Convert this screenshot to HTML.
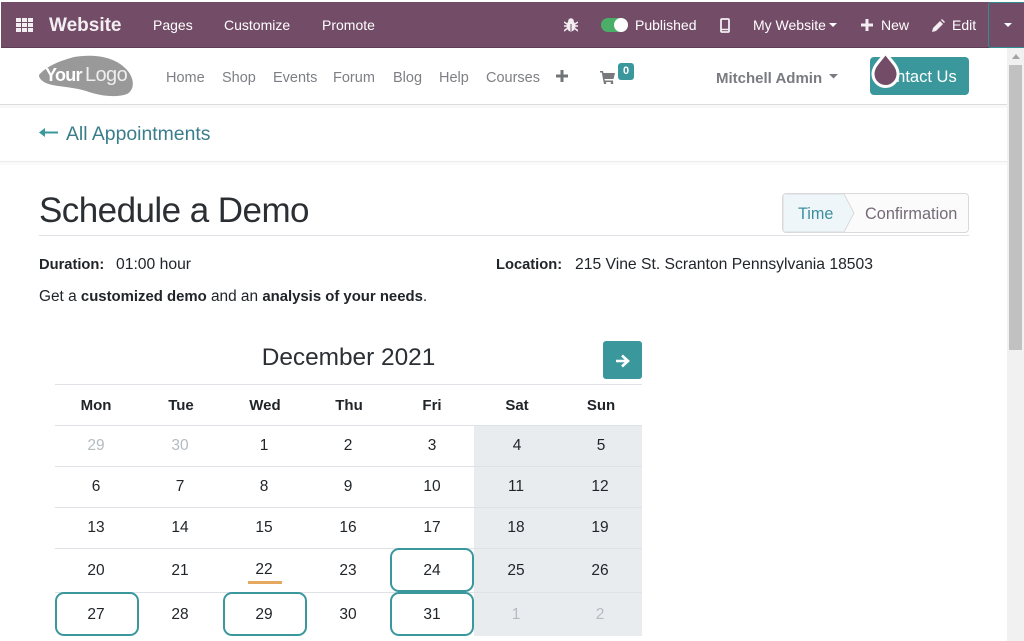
<!DOCTYPE html>
<html><head><meta charset="utf-8"><style>
html,body{margin:0;padding:0;width:1024px;height:641px;overflow:hidden;background:#fff}
body{position:relative;font-family:"Liberation Sans",sans-serif;color:#212529}
.a{position:absolute;white-space:nowrap;line-height:1}
.t{font-size:14px;color:#fff}
.n{font-size:14.5px;color:#7d7f84;top:71px}
.c{position:absolute;width:84px;text-align:center;font-size:15.5px;line-height:1;color:#212529}
.h{font-weight:bold;font-size:15px}
.m{color:#b4bcc2}
.l{position:absolute;left:55px;width:587px;height:1px;background:#dee2e6}
.b{position:absolute;width:80px;border:2px solid #3a979c;border-radius:9px;background:#fff}
.p{font-size:15.7px}
.p b{font-size:14.7px}
svg{position:absolute;display:block}
</style></head><body>
<div class="a" style="left:1px;top:2px;width:1023px;height:45px;background:#734c67"></div>
<div class="a" style="left:1px;top:47px;width:1023px;height:1px;background:#5e3f55"></div>
<svg style="left:16px;top:18px" width="18" height="15"><path fill="#f3eef2" d="M0 0h5v4H0zM6 0h5v4H6zM12 0h5v4h-5zM0 5h5v4H0zM6 5h5v4H6zM12 5h5v4h-5zM0 10h5v4H0zM6 10h5v4H6zM12 10h5v4h-5z"/></svg>
<div class="a" style="left:49px;top:16px;font-size:19px;font-weight:bold;color:#f3eef2">Website</div>
<div class="a t" style="left:153px;top:18px">Pages</div>
<div class="a t" style="left:224px;top:18px">Customize</div>
<div class="a t" style="left:322px;top:18px">Promote</div>
<svg style="left:564px;top:18px" width="14" height="14"><ellipse cx="7" cy="8" rx="4.500" ry="5.500" fill="#f3eef2"/><circle cx="7" cy="3" r="2.800" fill="#f3eef2"/><path stroke="#f3eef2" stroke-width="1.500" d="M0 4l3 2M14 4l-3 2M0 8h3M14 8h-3M0 13l3-2.500M14 13l-3-2.500"/><path stroke="#734c67" d="M7 6v7"/></svg>
<div class="a" style="left:601px;top:18px;width:27px;height:14px;background:#4aad68;border-radius:7px"></div>
<div class="a" style="left:614px;top:18px;width:14px;height:14px;background:#fff;border-radius:50%"></div>
<div class="a t" style="left:635px;top:18px">Published</div>
<svg style="left:720px;top:18px" width="10" height="15"><rect x="1" y="1" width="8" height="13" rx="1" fill="none" stroke="#f3eef2" stroke-width="1.800"/><path stroke="#f3eef2" stroke-width="1.500" d="M1 11.500h8"/></svg>
<div class="a t" style="left:753px;top:18px">My Website</div>
<svg style="left:829px;top:23px" width="8" height="5"><path fill="#fff" d="M0 0h8L4 4z"/></svg>
<svg style="left:861px;top:19px" width="12" height="12"><path fill="#f3eef2" d="M4.500 0h3v4.500H12v3H7.500V12h-3V7.500H0v-3h4.500z"/></svg>
<div class="a t" style="left:881px;top:18px">New</div>
<svg style="left:932px;top:19px" width="13" height="13"><path fill="#f3eef2" d="M0 13l1-4 7-7 3 3-7 7zM9 1l1-1 3 3-1 1z"/></svg>
<div class="a t" style="left:952px;top:18px">Edit</div>
<div class="a" style="left:988px;top:2px;width:36px;height:44px;border:1px solid #2f8f93;border-right:0;border-radius:3px 0 0 3px;box-sizing:content-box"></div>
<svg style="left:1004px;top:23px" width="8" height="5"><path fill="#fff" d="M0 0h8L4 4z"/></svg>

<div class="a" style="left:0;top:104px;width:1007px;height:1px;background:#dcdcdc"></div>
<div class="a" style="left:0;top:105px;width:1007px;height:3px;background:#f8f8f8"></div>
<svg style="left:38px;top:55px" width="96" height="42"><path fill="#999" d="M1 20C8 12 18 7 36 2 54-1 75 1 87 13 96 21 98 34 89 39 78 43 62 41 48 36 32 31 14 32 6 27 3 25 1 23 1 20z"/></svg>
<div class="a" style="left:45px;top:66px;font-size:18px;font-weight:bold;color:#fff;letter-spacing:-.7px">Your</div>
<div class="a" style="left:85px;top:65px;font-size:20px;color:#eee;letter-spacing:-.6px">Logo</div>
<div class="a n" style="left:166px">Home</div>
<div class="a n" style="left:222px">Shop</div>
<div class="a n" style="left:273px">Events</div>
<div class="a n" style="left:333px">Forum</div>
<div class="a n" style="left:393px">Blog</div>
<div class="a n" style="left:439px">Help</div>
<div class="a n" style="left:486px">Courses</div>
<svg style="left:556px;top:70px" width="12" height="12"><path fill="#727479" d="M4.500 0h3v4.500H12v3H7.500V12h-3V7.500H0v-3h4.500z"/></svg>
<svg style="left:600px;top:71px" width="15" height="13"><path fill="#77797d" d="M0 0h3l.5 2H15l-1.500 6H4.500l.3 1.500H13V11H3.500L1.800 1.500H0z"/><circle cx="5" cy="12" r="1.300" fill="#77797d"/><circle cx="12" cy="12" r="1.300" fill="#77797d"/></svg>
<div class="a" style="left:618px;top:63px;width:16px;height:17px;background:#3a979c;border-radius:3px;color:#fff;font-size:11px;font-weight:bold;text-align:center;line-height:17px">0</div>
<div class="a" style="left:716px;top:71px;font-size:15px;font-weight:bold;color:#797b80">Mitchell Admin</div>
<svg style="left:829px;top:74px" width="9" height="5"><path fill="#797b80" d="M0 0h9L4.500 4.500z"/></svg>
<div class="a" style="left:870px;top:57px;width:99px;height:38px;background:#3a979c;border-radius:4px"></div>
<div class="a" style="left:887px;top:69px;font-size:16.500px;color:#fff">ontact Us</div>
<svg style="left:870px;top:50px" width="32" height="38"><path fill="#734c67" stroke="#fff" stroke-width="3" d="M15.500 3C21 11 28 16 28 24a12.500 12.500 0 0 1-25 0C3 16 10 11 15.500 3z"/></svg>

<svg style="left:39px;top:127px" width="20" height="11"><path fill="#3a979c" d="M0 5.500L6 1v3.500h13v2H6V10z"/></svg>
<div class="a" style="left:66px;top:125px;font-size:19.400px;color:#3b7d8c">All Appointments</div>
<div class="a" style="left:0;top:161px;width:1007px;height:1px;background:#ececec"></div>
<div class="a" style="left:0;top:162px;width:1007px;height:3px;background:#fafafa"></div>

<div class="a" style="left:39px;top:193px;font-size:35px;letter-spacing:-.55px;color:#2b2f33">Schedule a Demo</div>
<div class="a" style="left:39px;top:235px;width:930px;height:1px;background:#dee2e6"></div>
<div class="a" style="left:782px;top:193px;width:185px;height:38px;border:1px solid #d9d9dc;border-radius:4px;background:#fbfbfb"></div>
<svg style="left:783px;top:194px" width="72" height="38"><path fill="#eff6f9" stroke="#dadadd" d="M0 0H61L71 19 61 38H0z"/></svg>
<div class="a" style="left:798px;top:206px;font-size:16.200px;color:#3c8f9f">Time</div>
<div class="a" style="left:865px;top:206px;font-size:16.300px;color:#766a78">Confirmation</div>

<div class="a p" style="left:39px;top:257px"><b>Duration:</b></div>
<div class="a p" style="left:116px;top:257px">01:00 hour</div>
<div class="a p" style="left:496px;top:257px"><b>Location:</b></div>
<div class="a p" style="left:575px;top:257px">215 Vine St. Scranton Pennsylvania 18503</div>
<div class="a p" style="left:39px;top:289px;font-size:15.400px">Get a <b style="font-size:14.900px">customized demo</b> and an <b style="font-size:14.900px">analysis of your needs</b>.</div>

<div class="a" style="left:55px;top:346px;width:587px;text-align:center;font-size:24.400px;color:#2b2f33">December 2021</div>
<div class="a" style="left:603px;top:341px;width:39px;height:38px;background:#3a979c;border-radius:3px"></div>
<svg style="left:616px;top:354px" width="14" height="14"><path fill="none" stroke="#fff" stroke-width="2.600" d="M0 7h11M6 1.500L12 7l-6 5.500"/></svg>

<div class="a" style="left:474px;top:426px;width:168px;height:210px;background:#e9ecef"></div>
<div class="l" style="top:384px;background:#dfe2e6"></div>
<div class="l" style="top:425px"></div>
<div class="l" style="top:466px"></div>
<div class="l" style="top:507px"></div>
<div class="l" style="top:548px"></div>
<div class="l" style="top:592px"></div>

<div class="c h" style="left:54px;top:398px">Mon</div><div class="c h" style="left:139px;top:398px">Tue</div><div class="c h" style="left:223px;top:398px">Wed</div><div class="c h" style="left:307px;top:398px">Thu</div><div class="c h" style="left:390px;top:398px">Fri</div><div class="c h" style="left:475px;top:398px">Sat</div><div class="c h" style="left:559px;top:398px">Sun</div>

<div class="c m" style="left:54px;top:438px">29</div><div class="c m" style="left:138px;top:438px">30</div><div class="c" style="left:222px;top:438px">1</div><div class="c" style="left:306px;top:438px">2</div><div class="c" style="left:390px;top:438px">3</div><div class="c" style="left:475px;top:438px">4</div><div class="c" style="left:559px;top:438px">5</div>
<div class="c" style="left:54px;top:479px">6</div><div class="c" style="left:138px;top:479px">7</div><div class="c" style="left:222px;top:479px">8</div><div class="c" style="left:306px;top:479px">9</div><div class="c" style="left:390px;top:479px">10</div><div class="c" style="left:474px;top:479px">11</div><div class="c" style="left:558px;top:479px">12</div>
<div class="c" style="left:54px;top:520px">13</div><div class="c" style="left:138px;top:520px">14</div><div class="c" style="left:222px;top:520px">15</div><div class="c" style="left:306px;top:520px">16</div><div class="c" style="left:390px;top:520px">17</div><div class="c" style="left:474px;top:520px">18</div><div class="c" style="left:558px;top:520px">19</div>

<div class="b" style="left:390px;top:548px;height:40px"></div>
<div class="b" style="left:55px;top:592px;height:40px"></div>
<div class="b" style="left:223px;top:592px;height:40px"></div>
<div class="b" style="left:390px;top:592px;height:40px"></div>

<div class="c" style="left:54px;top:563px">20</div><div class="c" style="left:138px;top:563px">21</div><div class="c" style="left:222px;top:562px">22</div><div class="c" style="left:306px;top:563px">23</div><div class="c" style="left:390px;top:563px">24</div><div class="c" style="left:474px;top:563px">25</div><div class="c" style="left:558px;top:563px">26</div>
<div class="a" style="left:248px;top:581px;width:34px;height:3px;background:#e4a85f"></div>
<div class="c" style="left:54px;top:607px">27</div><div class="c" style="left:138px;top:607px">28</div><div class="c" style="left:222px;top:607px">29</div><div class="c" style="left:306px;top:607px">30</div><div class="c" style="left:390px;top:607px">31</div><div class="c m" style="left:474px;top:607px">1</div><div class="c m" style="left:558px;top:607px">2</div>

<div class="a" style="left:1007px;top:48px;width:17px;height:593px;background:#f1f1f1"></div>
<div class="a" style="left:1009px;top:65px;width:13px;height:285px;background:#c1c1c1"></div>
<svg style="left:1012px;top:54px" width="8" height="5"><path fill="#a3a3a3" d="M4 0l4 5H0z"/></svg>
</body></html>
